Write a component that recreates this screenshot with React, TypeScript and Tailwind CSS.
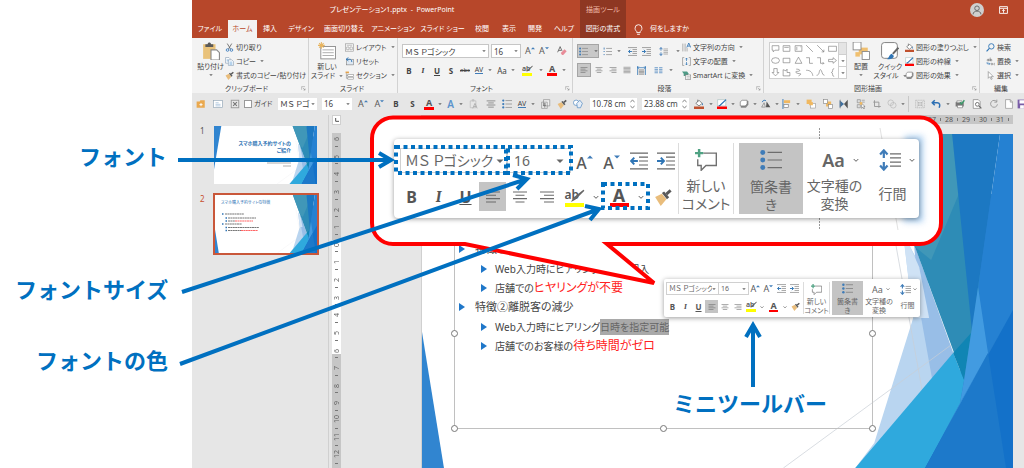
import type { ReactNode } from 'react';

const ICONS: Record<string, ReactNode> = {
  paste: (
    <>
      <rect x="1" y="2" width="11" height="13" fill="#e9c27a" />
      <path d="M3 2h2c0-2 3-2 3 0h2v2.500H3z" fill="#595959" />
      <path d="M8 7h5l2.500 2.500V16H8z" fill="#fff" stroke="#8a8a8a" />
    </>
  ),
  cut: (
    <>
      <path d="M4 1l6 10M12 1L6 11" stroke="#666" strokeWidth="1.500" />
      <circle cx="4.500" cy="12.500" r="2.300" fill="none" stroke="#3f7fbf" strokeWidth="1.600" />
      <circle cx="11.500" cy="12.500" r="2.300" fill="none" stroke="#3f7fbf" strokeWidth="1.600" />
    </>
  ),
  copy: (
    <>
      <path d="M1 1h6l2 2v8H1z" fill="#fff" stroke="#7b94ad" />
      <path d="M6 5h6l3 3v7H6z" fill="#fff" stroke="#7b94ad" />
      <path d="M8 9h5M8 11h5M8 13h5M3 5h3M3 7h3" stroke="#5b9bd5" />
    </>
  ),
  brush: (
    <>
      <path d="M1 8l6-3 4 5-5 6z" fill="#e9bd7c" />
      <path d="M7 4.500l4.500 5.500 2-1.700L9 3z" fill="#595959" />
      <path d="M11 5.500L14.800 2.200" stroke="#595959" strokeWidth="2.600" />
    </>
  ),
  newSlide: (
    <>
      <rect x="2.500" y="4" width="13" height="11" fill="#fff" stroke="#8a8a8a" strokeWidth=".8" />
      <path d="M4 7h10M4 9.500h10M4 12h10" stroke="#9a9a9a" strokeWidth=".7" />
      <path d="M3 0v6M0 3h6M1 1l4 4M5 1L1 5" stroke="#e8b45e" strokeWidth=".9" />
    </>
  ),
  layout: (
    <>
      <rect x=".8" y="1.500" width="14.400" height="13" fill="#fff" stroke="#8a8a8a" />
      <path d="M3 4h10M3 7h4v5H3zM9 7h4v5H9z" fill="none" stroke="#8a8a8a" />
    </>
  ),
  reset: (
    <>
      <rect x="3" y="4" width="12" height="10" fill="#dfe9f3" stroke="#777" />
      <path d="M6 1L2 4l4 3M2 4h6c3 0 4 2 4 5" fill="none" stroke="#2f75b5" strokeWidth="1.600" />
    </>
  ),
  section: (
    <>
      <path d="M1 1h6v3H1z" fill="#e2a04a" />
      <rect x="5" y="6" width="10" height="3.500" fill="#fff" stroke="#888" />
      <rect x="5" y="11" width="10" height="3.500" fill="#fff" stroke="#888" />
      <path d="M2.500 4v9H5M2.500 8H5" fill="none" stroke="#888" />
    </>
  ),
  eraser: (
    <>
      <path d="M1 10L5 1l3 7M2.500 7h4" fill="none" stroke="#595959" strokeWidth="1.300" />
      <path d="M6 11l6-6 3.500 3.500L10 14.500H8z" fill="#e88c98" />
    </>
  ),
  bullets: (
    <>
      <g fill="#3f7cb8">
        <circle cx="2" cy="2.500" r="1.800" />
        <circle cx="2" cy="8" r="1.800" />
        <circle cx="2" cy="13.500" r="1.800" />
      </g>
      <path d="M5.500 2.500H16M5.500 8H16M5.500 13.500H16" stroke="#6d6d6d" strokeWidth=".9" />
    </>
  ),
  numbering: (
    <>
      <path d="M2 1v3.500M1 8h2M1 13.500h2" stroke="#3f7cb8" strokeWidth="1.600" />
      <path d="M5.500 2.500H16M5.500 8H16M5.500 13.500H16" stroke="#6d6d6d" strokeWidth="1" />
    </>
  ),
  outdent: (
    <>
      <path d="M0 1h16M8 4.500h8M8 8h8M8 11.500h8M0 15h16" stroke="#666" strokeWidth="1" />
      <path d="M7 8H1M3.800 5L1 8l2.800 3" fill="none" stroke="#2f75b5" strokeWidth="1.700" />
    </>
  ),
  indent: (
    <>
      <path d="M0 1h16M8 4.500h8M8 8h8M8 11.500h8M0 15h16" stroke="#666" strokeWidth="1" />
      <path d="M0 8h6M3.400 5l2.800 3-2.800 3" fill="none" stroke="#2f75b5" strokeWidth="1.700" />
    </>
  ),
  spacing: (
    <>
      <path d="M3.500 1v5.500M3.500 9.500V15M.8 4L3.500 1 6.200 4M.8 12l2.700 3 2.700-3" fill="none" stroke="#3f7cb8" strokeWidth="1.600" />
      <path d="M8 3.500h8M8 6.500h8M8 9.500h8M8 12.500h8" stroke="#6d6d6d" strokeWidth=".9" />
    </>
  ),
  left: <path d="M1 3h14M1 6.300h10M1 9.600h14M1 13h10" stroke="#6a6a6a" strokeWidth="1.100" />,
  center: <path d="M1 3h14M3.500 6.300h9M1 9.600h14M3.500 13h9" stroke="#6a6a6a" strokeWidth="1.100" />,
  right: <path d="M1 3h14M5 6.300h10M1 9.600h14M5 13h10" stroke="#6a6a6a" strokeWidth="1.100" />,
  justify: <path d="M1 2.500h14M1 5.300h14M1 8h14M1 10.800h14M1 13.500h14" stroke="#6a6a6a" strokeWidth="1.100" />,
  distribute: (
    <>
      <path d="M1 0v16M15 0v16M1 3h14M3 1L1 3l2 2M13 1l2 2-2 2" fill="none" stroke="#2f75b5" strokeWidth="1.300" />
      <path d="M3 7h10M3 9.500h10M3 12h10M3 14.500h10" stroke="#6a6a6a" strokeWidth="1.200" />
    </>
  ),
  columns: <path d="M1 3h6M1 6h6M1 9h6M1 12h6M9 3h6M9 6h6M9 9h6M9 12h6" stroke="#5b8fc4" strokeWidth="1.500" />,
  direction: (
    <>
      <path d="M1.500 1v14M5.500 1v14M9 9v6" stroke="#777" strokeWidth="1" />
      <path d="M8.500 8L12 0l3.500 8M10 5.500h4" fill="none" stroke="#2f75b5" strokeWidth="1.500" />
    </>
  ),
  textAlign: (
    <>
      <path d="M4 1H1v14h3M12 1h3v14h-3" fill="none" stroke="#777" />
      <path d="M8 2v5M8 9v5M6 4l2-2 2 2M6 12l2 2 2-2" fill="none" stroke="#2f75b5" strokeWidth="1.300" />
    </>
  ),
  smartArt: (
    <>
      <path d="M0 1h9l3 4-3 4H3V5z" fill="#4e9a86" />
      <rect x="6" y="7" width="9.500" height="8" fill="#fff" stroke="#777" />
      <path d="M8 10h6M8 12.500h6" stroke="#999" />
    </>
  ),
  arrange: (
    <>
      <rect x="6" y="5" width="8" height="6" fill="#f0c070" />
      <rect x="1" y="0" width="7" height="7" fill="#fff" stroke="#888" strokeWidth=".8" />
      <rect x="9" y="8.500" width="6.500" height="7" fill="#fff" stroke="#888" strokeWidth=".8" />
      <path d="M3 9h4v4H3z" fill="#f0c070" />
    </>
  ),
  quickStyle: (
    <>
      <rect x=".5" y=".5" width="14" height="14" rx="2.500" fill="#fff" stroke="#777" strokeWidth=".8" />
      <path d="M15.500 5l-5 5.500" stroke="#666" strokeWidth="1.800" />
      <path d="M5 15c2 0 2-3.500 4.500-4.500l2 2C10.500 15 8 16 5 15z" fill="#2f75b5" />
    </>
  ),
  fill: (
    <>
      <path d="M3 7l5-5 5 5-5 4z" fill="#fff" stroke="#666" strokeWidth="1.200" />
      <path d="M13 6c2 2 2 4 0 4z" fill="#2f75b5" />
      <path d="M6 1v4" stroke="#666" strokeWidth="1.200" />
      <rect x="0" y="12" width="16" height="4" fill="#c0502d" />
    </>
  ),
  outline: (
    <>
      <path d="M1 1h13v10H1z" fill="#fff" stroke="#8aa" strokeWidth=".7" />
      <path d="M14.500 1L5 10l-2 1" fill="none" stroke="#2f75b5" strokeWidth="2" />
      <rect x="0" y="12" width="16" height="4" fill="#f00" />
    </>
  ),
  effect: (
    <>
      <path d="M3 8l4-5h8v6l-4 5H3z" fill="#8a8a8a" />
      <path d="M2 4.500L5 2h8v6l-3 3H2z" fill="#fff" stroke="#666" />
    </>
  ),
  search: (
    <>
      <circle cx="9.500" cy="6" r="4.800" fill="none" stroke="#2f75b5" strokeWidth="1.600" />
      <path d="M6 9.500L1 15" stroke="#2f75b5" strokeWidth="2" />
    </>
  ),
  replace: (
    <>
      <path d="M2 5.500a1.500 1.500 0 1 0 3 0 1.500 1.500 0 1 0-3 0M5.300 3v4.300M7.500 1v6.300M7.500 5.500a1.500 1.500 0 1 0 3 0 1.500 1.500 0 1 0-3 0" fill="none" stroke="#666" />
      <path d="M2 9v3h5M5 10l2 2-2 2" fill="none" stroke="#2f75b5" strokeWidth="1.200" />
      <path d="M9 12.500a1.500 1.500 0 1 0 3 0 1.500 1.500 0 1 0-3 0M15.500 11.500c-2-1-2.500 3 0 2.300" fill="none" stroke="#666" />
    </>
  ),
  pointer: <path d="M4 1v12l3-3 2 5 2-1-2-4h4z" fill="#fff" stroke="#777" strokeWidth="1" />,
  folder: (
    <>
      <path d="M1 4h5l1-2h7v12H1z" fill="#eaa94f" />
      <path d="M8 6.500v5M5.500 9h5" stroke="#fff" strokeWidth="1.500" />
    </>
  ),
  mail: (
    <>
      <rect x="1" y="2.500" width="14" height="11" fill="#fff" stroke="#8fa3b5" />
      <path d="M4 6h5M4 8.500h8M4 11h8" stroke="#8fb0d0" />
    </>
  ),
  close: (
    <>
      <rect x="2" y="2" width="12" height="12" fill="#e8e8e8" stroke="#999" strokeWidth="1.500" />
      <path d="M5 5l6 6M11 5l-6 6" stroke="#777" strokeWidth="1.800" />
    </>
  ),
  pasteText: (
    <>
      <path d="M2 3h9v11H2zM5 1h3v2H5z" fill="none" stroke="#b5b5b5" />
      <path d="M6 15l3.500-8 3.500 8M7.500 12h4" fill="none" stroke="#aaa" strokeWidth="1.300" />
    </>
  ),
  doc: (
    <>
      <path d="M4 1h10v10H4zM1 5h9v10H1z" fill="#eee" stroke="#888" />
      <path d="M3 8h5M3 10.500h5M6 6v8" stroke="#666" />
    </>
  ),
  shapes: (
    <>
      <circle cx="5" cy="6" r="4.300" fill="#fff" stroke="#5b8fc4" strokeWidth="1.200" />
      <path d="M6 7l5-5 4 5-3 7H7z" fill="#e5eef8" stroke="#5b8fc4" strokeWidth="1.200" />
    </>
  ),
  rotate: (
    <>
      <path d="M8 13h7L9 4z" fill="#555" />
      <path d="M7 13H1l4-7z" fill="none" stroke="#777" />
      <path d="M2 5c1-3 4-4 6-2" fill="none" stroke="#2f75b5" strokeWidth="1.400" />
    </>
  ),
  alignObj: (
    <>
      <path d="M1.500 0v16" stroke="#2f75b5" strokeWidth="1.400" />
      <rect x="3" y="2" width="10" height="4.500" fill="#f0b860" />
      <rect x="3" y="9" width="7" height="4.500" fill="#fff" stroke="#777" />
    </>
  ),
  forward: (
    <>
      <rect x="1" y="1" width="8" height="7" fill="#f0b860" />
      <rect x="7" y="7" width="8" height="7.500" fill="#fff" stroke="#999" />
      <path d="M5 5h6v5H5z" fill="#f0b860" />
    </>
  ),
  backward: (
    <>
      <rect x="5" y="4" width="8" height="8" fill="#f0b860" />
      <rect x="1" y="1" width="6" height="6" fill="#fff" stroke="#888" />
      <rect x="9" y="9" width="6" height="6" fill="#fff" stroke="#888" />
    </>
  ),
  flip: (
    <>
      <path d="M1 2l7 6-7 6z" fill="#3d6f9f" />
      <path d="M14 1v14L8 8z" fill="#555" />
      <path d="M2 1v14" stroke="#777" />
    </>
  ),
  pane: (
    <>
      <path d="M2 1h5v5H2zM2 9h5v5H2z" fill="#ddd" stroke="#888" />
      <path d="M9 2h5M9 5h5" stroke="#888" />
      <path d="M9 7v8l2-2 1.500 3 1-1-1-3h2z" fill="#fff" stroke="#777" />
      <path d="M6 5h4v4H6z" fill="#f0b860" />
    </>
  ),
  crop: <path d="M4 2v10h10M2 5h9v9" fill="none" stroke="#999" strokeWidth="1.500" />,
  merge: (
    <>
      <circle cx="6" cy="6" r="4.500" fill="none" stroke="#b5b5b5" />
      <circle cx="10" cy="10" r="4.500" fill="none" stroke="#b5b5b5" />
    </>
  ),
  frame: (
    <>
      <path d="M1 2h14v12H1z" fill="none" stroke="#aaa" strokeDasharray="2 1" />
      <path d="M3 4l4 3M13 4L9 7M3 12l4-3M13 12L9 9M5 6h6v4H5z" fill="#eee" stroke="#aaa" />
    </>
  ),
  undo: <path d="M6 2L2 6l4 4M2.500 6H10c4 0 5 4 3 8" fill="none" stroke="#2c6fb3" strokeWidth="2.400" />,
  check: (
    <>
      <path d="M1 5h13v7H1z" fill="#777" />
      <path d="M3 3h8v3H3zM4 10h8v4H4z" fill="#fff" stroke="#777" />
      <path d="M8 5l2.500 3L15 2" fill="none" stroke="#3a9b6a" strokeWidth="2.200" />
    </>
  ),
  preview: (
    <>
      <path d="M2 1h8l3 3v11H2z" fill="#fff" stroke="#777" />
      <circle cx="8.500" cy="8.500" r="3" fill="#fff" stroke="#666" strokeWidth="1.400" />
      <path d="M11 11l4 4" stroke="#666" strokeWidth="2" />
    </>
  ),
  refresh: <path d="M12.500 4.500a5.500 5.500 0 1 0 1 4M12.500 1v4h-4" fill="none" stroke="#999" strokeWidth="1.500" />,
  page: <path d="M2.500 1h7.500l3.500 3.500V15h-11zM10 1v4h3.500" fill="#fff" stroke="#888" />,
  save: (
    <>
      <path d="M1 1h14v14H1z" fill="#7a5ea8" />
      <path d="M4 2h8v5H4zM5 10h6v5H5z" fill="#fff" />
    </>
  ),
  comment: (
    <>
      <path d="M6 3h9.500v9H8l-3.500 3.500V12H2V7.500" fill="none" stroke="#707070" strokeWidth="1" />
      <path d="M3 0v6M0 3h6" stroke="#4fa283" strokeWidth="1.800" />
    </>
  ),
  marker: <path d="M15 2L7 10l-2 1 1-2z" fill="#666" stroke="#666" strokeWidth="1.300" />,
  launcher: (
    <>
      <path d="M2 12V2h11" fill="none" stroke="#888" strokeWidth="1.500" />
      <path d="M6 6l7 7M13 8v5H8" fill="none" stroke="#777" strokeWidth="1.500" />
    </>
  ),
  chevron: <path d="M2 5.500l6 6 6-6" fill="none" stroke="#555" strokeWidth="2.600" />,
  down: <path d="M1 5h14l-7 7z" fill="#666" />,
  bulb: (
    <path d="M5.500 11C3 9 3 6.500 3 6a5 5 0 0 1 10 0c0 .5 0 3-2.500 5v1.500h-5zM6 15h4" fill="none" stroke="#fff" strokeWidth="1.300" />
  ),
};

function Icon({ name, className = 'size-[10px]' }: { name: string; className?: string }) {
  return (
    <svg viewBox="0 0 16 16" className={`shrink-0 ${className}`} aria-hidden="true">
      {ICONS[name]}
    </svg>
  );
}

const Chev = () => <Icon name="down" className="size-1" />;

function RedA({ className, bar }: { className: string; bar: string }) {
  return (
    <span className="flex flex-col items-center">
      <span className={`font-bold text-[#555] ${className}`}>A</span>
      <span className={`bg-[#f00] ${bar}`} />
    </span>
  );
}

function Highlighter({ big }: { big?: boolean }) {
  return (
    <span className="relative flex flex-col items-start font-semibold text-[#555]">
      <span className={big ? 'w-[19px] text-left text-xs leading-4' : 'w-2.5 text-left text-[7px] leading-2'}>ab</span>
      <span className={big ? 'h-1 w-[19px] bg-[#ff0]' : 'h-[3px] w-2.5 bg-[#ff0]'} />
      <Icon name="marker" className={big ? 'absolute top-px left-0.5 size-[18px]' : 'absolute top-0 left-0.5 size-[9px]'} />
    </span>
  );
}

function SizeA({ up, big }: { up?: boolean; big?: boolean }) {
  return (
    <span className="flex items-center text-[#5a5a5a]">
      <span className={big ? 'pt-1 text-base leading-5 font-medium' : 'text-[9px] leading-3'}>A</span>
      <svg viewBox="0 0 6 12" className={big ? 'h-5 w-1.5' : 'h-2.5 w-1'} aria-hidden="true">
        <path d={up ? 'M0 3.500l3-3 3 3z' : 'M0 .5l3 3 3-3z'} fill="#3f7cb8" />
      </svg>
    </span>
  );
}

function Picker({ label, value, className, arrow = 'size-1' }: { label: string; value: string; className: string; arrow?: string }) {
  return (
    <label className={`flex shrink-0 items-center overflow-hidden bg-white ${className}`}>
      <select aria-label={label} className="min-w-0 flex-1 appearance-none bg-transparent outline-none" defaultValue={value}>
        <option>{value}</option>
      </select>
      <Icon name="down" className={arrow} />
    </label>
  );
}

const TABS = [
  { label: 'ファイル', w: 'w-9' },
  { label: 'ホーム', w: 'w-[29px]', active: true },
  { label: '挿入', w: 'w-[26px]' },
  { label: 'デザイン', w: 'w-9' },
  { label: '画面切り替え', w: 'w-[50px]' },
  { label: 'アニメーション', w: 'w-[48px]' },
  { label: 'スライド ショー', w: 'w-[51px]' },
  { label: '校閲', w: 'w-[28px]' },
  { label: '表示', w: 'w-[26px]' },
  { label: '開発', w: 'w-[26px]' },
  { label: 'ヘルプ', w: 'w-[32px]' },
];

function TitleBar() {
  return (
    <header className="flex h-[38px] bg-[#b7472a] text-[7px] text-white">
      <div className="flex w-[388px] flex-col">
        <div className="flex h-5 items-center justify-center pl-3">プレゼンテーション1.pptx&nbsp; -&nbsp; PowerPoint</div>
        <nav className="flex h-[18px]">
          {TABS.map((t) => (
            <button
              key={t.label}
              className={`flex shrink-0 items-center justify-center whitespace-nowrap ${t.w} ${t.active ? 'bg-[#f3f3f3] text-[#b7472a]' : ''}`}
            >
              {t.label}
            </button>
          ))}
        </nav>
      </div>
      <div className="flex w-[46px] flex-col items-center bg-[#8e3722]">
        <span className="flex h-5 items-center text-[#f0b9a6]">描画ツール</span>
        <button className="flex h-[18px] items-center whitespace-nowrap">図形の書式</button>
      </div>
      <div className="flex flex-1 flex-col">
        <div className="flex h-5 items-center justify-end gap-[15px] pr-4">
          <svg viewBox="0 0 16 16" className="size-3.5" aria-label="アカウント">
            <circle cx="8" cy="8" r="8" fill="#cfcfcf" />
            <circle cx="8" cy="6" r="2.600" fill="none" stroke="#666" strokeWidth="1.100" />
            <path d="M3.500 13c0-5 9-5 9 0" fill="none" stroke="#666" strokeWidth="1.100" />
          </svg>
          <svg viewBox="0 0 16 14" className="h-2 w-[9px]" aria-label="リボンの表示オプション">
            <path d="M1 1h14v12H1zM1 4h14M8 12V6M5.500 8.500L8 6l2.500 2.500" fill="none" stroke="#fff" strokeWidth="1.600" />
          </svg>
        </div>
        <button className="flex h-[18px] items-center gap-1.5 pl-[7px]">
          <Icon name="bulb" className="size-[11px]" />
          何をしますか
        </button>
      </div>
    </header>
  );
}

function Group({ label, className, launcher, children }: { label: string; className: string; launcher?: boolean; children: ReactNode }) {
  return (
    <section className={`flex shrink-0 flex-col overflow-hidden ${className}`}>
      <div className="flex h-[45px]">{children}</div>
      <div className="flex h-2.5 items-center pr-0.5">
        <span className="flex-1 text-center">{label}</span>
        {launcher && <Icon name="launcher" className="size-[5px]" />}
      </div>
    </section>
  );
}

function Cmd({ icon, label, chev }: { icon: string; label: string; chev?: boolean }) {
  return (
    <button className="flex h-3.5 items-center gap-0.5 whitespace-nowrap">
      <Icon name={icon} className="size-[9px]" />
      {label}
      {chev && <span className="pl-0.5"><Chev /></span>}
    </button>
  );
}

function BigCmd({ icon, lines, className, chev }: { icon: string; lines: string[]; className: string; chev?: 'inline' | 'below' }) {
  return (
    <button className={`flex shrink-0 flex-col items-center pt-1 leading-[9px] ${className}`}>
      <Icon name={icon} className="mb-[2px] size-[18px]" />
      {lines.map((l, i) => (
        <span key={l} className="flex items-center gap-1 whitespace-nowrap">
          {l}
          {chev === 'inline' && i === lines.length - 1 && <Chev />}
        </span>
      ))}
      {chev === 'below' && <span className="pt-0.5"><Chev /></span>}
    </button>
  );
}

const Cell = ({ w, children, on }: { w: string; children: ReactNode; on?: boolean }) => (
  <button className={`flex shrink-0 items-center justify-center ${w} ${on ? 'border border-[#a5a5a5] bg-[#c8c8c8]' : ''}`}>{children}</button>
);

const GALLERY = [
  'M2 3h12v8H7l-3 3v-3H2z', 'M2 3h12v10H2zM4 6h8', 'M2 3h12v10H2zM5 5v6M11 5h1', 'M2 2l12 12', 'M2 2l12 12M14 10v4h-4', 'M1 4h14v9H1z',
  'M1 8a7 5 0 1 0 14 0a7 5 0 1 0-14 0', 'M2 4h12v8H2z', 'M8 2l6 11H2z', 'M2 3h6v10h6', 'M2 3h6v10h6M12 11l2 2-2 2', 'M1 6h8V3l6 5-6 5v-3H1z',
  'M5 1h6v7h3l-6 6-6-6h3z', 'M2 3l5 2 2-3v6h5v6H2z', 'M4 2c8 0 8 4 2 4s-2 4 4 4-2 4-2 4', 'M2 4c8 0 11 4 12 10', 'M1 13C7 13 5 3 8 3s2 10 7 10', 'M11 1C6 1 10 8 6 8c4 0 0 7 5 7',
];

function Ribbon() {
  return (
    <div className="flex h-[55px] divide-x divide-[#d2d2d2] overflow-hidden bg-[#f3f3f3] text-[7px] leading-[9px] text-[#444]">
      <Group label="クリップボード" className="w-[117px]" launcher>
        <BigCmd icon="paste" lines={['貼り付け']} chev="below" className="w-[33px] pl-1" />
        <div className="flex flex-col pt-0.5">
          <Cmd icon="cut" label="切り取り" />
          <Cmd icon="copy" label="コピー" chev />
          <Cmd icon="brush" label="書式のコピー/貼り付け" />
        </div>
      </Group>
      <Group label="スライド" className="w-[89px]">
        <BigCmd icon="newSlide" lines={['新しい', 'スライド']} chev="inline" className="w-9" />
        <div className="flex flex-col pt-0.5">
          <Cmd icon="layout" label="レイアウト" chev />
          <Cmd icon="reset" label="リセット" />
          <Cmd icon="section" label="セクション" chev />
        </div>
      </Group>
      <Group label="フォント" className="w-[175px]" launcher>
        <div className="flex flex-col gap-[5px] pt-1.5 pl-1">
          <div className="flex h-3.5 items-center">
            <Picker label="フォント" value="ＭＳ Ｐゴシック" className="h-3.5 w-[87px] border border-[#c6c6c6] px-0.5 text-[8px]" />
            <Picker label="フォント サイズ" value="16" className="mx-0.5 h-3.5 w-[30px] border border-[#c6c6c6] px-0.5 text-[8px]" />
            <Cell w="w-[14px]"><SizeA up /></Cell>
            <Cell w="w-[14px]"><SizeA /></Cell>
            <Cell w="w-[22px]"><Icon name="eraser" /></Cell>
          </div>
          <div className="flex h-3.5 items-center text-[8px]">
            <Cell w="w-[14px]"><b>B</b></Cell>
            <Cell w="w-[14px]"><b className="font-serif italic">I</b></Cell>
            <Cell w="w-[14px]"><b className="underline">U</b></Cell>
            <Cell w="w-[14px]"><b>S</b></Cell>
            <Cell w="w-[14px]"><span className="text-[6px] line-through">abc</span></Cell>
            <Cell w="w-[14px]"><span className="border-b border-[#3f7cb8] text-[7px] leading-[7px]">AV</span></Cell>
            <Cell w="w-[8px]"><Chev /></Cell>
            <Cell w="w-[16px]">Aa</Cell>
            <Cell w="w-[6px]"><Chev /></Cell>
            <Cell w="w-[22px]"><Highlighter /></Cell>
            <Cell w="w-[6px]"><Chev /></Cell>
            <Cell w="w-[16px]"><RedA className="text-[9px] leading-2" bar="h-[3px] w-2.5" /></Cell>
            <Cell w="w-[7px]"><Chev /></Cell>
          </div>
        </div>
      </Group>
      <Group label="段落" className="w-[191px]" launcher>
        <div className="flex w-[109px] flex-col gap-[5px] pt-1.5 pl-1">
          <div className="flex h-3.5">
            <Cell w="w-[22px] gap-1.5" on><Icon name="bullets" className="size-[9px]" /><Chev /></Cell>
            <Cell w="w-[16px]"><Icon name="numbering" className="size-[9px]" /></Cell>
            <Cell w="w-[7px]"><Chev /></Cell>
            <Cell w="w-[20px]"><Icon name="outdent" className="size-[9px]" /></Cell>
            <Cell w="w-[9px]"><Icon name="indent" className="size-[9px]" /></Cell>
            <Cell w="w-[24px]"><Icon name="spacing" className="size-[9px]" /></Cell>
            <Cell w="w-[5px]"><Chev /></Cell>
          </div>
          <div className="flex h-3.5">
            <Cell w="w-[14px]" on><Icon name="left" className="size-2" /></Cell>
            <Cell w="w-[15px]"><Icon name="center" className="size-2" /></Cell>
            <Cell w="w-[14px]"><Icon name="right" className="size-2" /></Cell>
            <Cell w="w-[14px]"><Icon name="justify" className="size-2" /></Cell>
            <Cell w="w-[14px]"><Icon name="distribute" className="size-[9px]" /></Cell>
            <Cell w="w-[20px]"><Icon name="columns" className="size-[9px]" /></Cell>
            <Cell w="w-[5px]"><Chev /></Cell>
          </div>
        </div>
        <div className="flex flex-col pt-0.5">
          <Cmd icon="direction" label="文字列の方向" chev />
          <Cmd icon="textAlign" label="文字の配置" chev />
          <Cmd icon="smartArt" label="SmartArt に変換" chev />
        </div>
      </Group>
      <Group label="図形描画" className="w-[216px]" launcher>
        <div className="mt-1 ml-[5px] flex h-[37px] w-[78px] border border-[#cfcfcf] bg-white">
          <div className="grid flex-1 grid-cols-6 items-center justify-items-center">
            {GALLERY.map((d) => (
              <svg key={d} viewBox="0 0 16 16" className="size-[9px]" aria-hidden="true">
                <path d={d} fill="none" stroke="#777" strokeWidth="1.100" />
              </svg>
            ))}
          </div>
          <div className="flex w-2 flex-col divide-y divide-[#cfcfcf] border-l border-[#cfcfcf]">
            <button aria-label="前へ" className="flex flex-1 items-center justify-center bg-[#e4e4e4]" />
            <button aria-label="次へ" className="flex flex-1 items-center justify-center"><Chev /></button>
            <button aria-label="その他" className="flex flex-1 items-center justify-center"><Chev /></button>
          </div>
        </div>
        <BigCmd icon="arrange" lines={['配置']} chev="below" className="w-[28px]" />
        <BigCmd icon="quickStyle" lines={['クイック', 'スタイル']} chev="inline" className="w-[30px]" />
        <div className="flex flex-col pt-0.5">
          <Cmd icon="fill" label="図形の塗りつぶし" chev />
          <Cmd icon="outline" label="図形の枠線" chev />
          <Cmd icon="effect" label="図形の効果" chev />
        </div>
      </Group>
      <Group label="編集" className="flex-1">
        <div className="flex flex-col pt-0.5 pl-1.5">
          <Cmd icon="search" label="検索" />
          <Cmd icon="replace" label="置換" chev />
          <Cmd icon="pointer" label="選択" chev />
        </div>
      </Group>
    </div>
  );
}

type Tool = { i?: string; w: string };
const TOOLS_A: Tool[] = [
  { i: 'pasteText', w: 'w-[19px]' }, { i: 'center', w: 'w-4' }, { i: 'bullets', w: 'w-4' },
];
const TOOLS_B: Tool[] = [
  { i: 'doc', w: 'w-[17px]' }, { i: 'brush', w: 'w-4' }, { i: 'shapes', w: 'w-4' },
];
const TOOLS_C: Tool[] = [
  { i: 'fill', w: 'w-4' }, { w: 'w-[7px]' }, { i: 'outline', w: 'w-4' }, { w: 'w-[6px]' }, { i: 'effect', w: 'w-[15px]' }, { w: 'w-[7px]' },
  { i: 'rotate', w: 'w-[15px]' }, { w: 'w-[7px]' }, { i: 'alignObj', w: 'w-[14px]' }, { w: 'w-2' }, { i: 'forward', w: 'w-[17px]' },
  { i: 'backward', w: 'w-[17px]' }, { i: 'flip', w: 'w-4' }, { i: 'pane', w: 'w-[17px]' }, { i: 'crop', w: 'w-4' }, { i: 'merge', w: 'w-[14px]' }, { w: 'w-2' },
];
const TOOLS_D: Tool[] = [
  { i: 'frame', w: 'w-4' }, { i: 'undo', w: 'w-4' }, { w: 'w-2' }, { i: 'check', w: 'w-4' }, { i: 'preview', w: 'w-[17px]' },
  { i: 'refresh', w: 'w-[17px]' }, { i: 'page', w: 'w-[14px]' }, { i: 'save', w: 'w-3' },
];

const Tools = ({ items }: { items: Tool[] }) => (
  <>
    {items.map((t, n) => (
      <Cell key={n} w={t.w}>{t.i ? <Icon name={t.i} /> : <Chev />}</Cell>
    ))}
  </>
);

function SizeInput({ label, value, className }: { label: string; value: string; className: string }) {
  return (
    <label className={`flex h-3 w-[47px] shrink-0 items-center bg-white ${className}`}>
      <input aria-label={label} defaultValue={value} className="min-w-0 flex-1 pl-0.5 text-[8px] outline-none" />
      <svg viewBox="0 0 6 12" className="h-2.5 w-[7px] pr-0.5" aria-hidden="true">
        <path d="M.5 4L3 1l2.500 3M.5 8L3 11l2.500-3" fill="none" stroke="#777" />
      </svg>
    </label>
  );
}

function QuickBar() {
  return (
    <div className="flex h-[22px] items-center overflow-hidden bg-[#e6e6e6] pl-px text-[8px] text-[#444]">
      <Tools items={[{ i: 'folder', w: 'w-4' }, { i: 'mail', w: 'w-[17px]' }, { i: 'close', w: 'w-[17px]' }]} />
      <label className="flex w-[35px] shrink-0 items-center gap-0.5 pl-px text-[7px]">
        <input type="checkbox" className="size-2 appearance-none border border-[#999] bg-white" />
        ガイド
      </label>
      <Picker label="フォント" value="ＭＳ Ｐゴ" className="mr-[5px] h-3 w-[39px] px-0.5" />
      <Picker label="フォント サイズ" value="16" className="mr-[3px] h-3 w-[30px] px-0.5" />
      <Cell w="w-4"><SizeA up /></Cell>
      <Cell w="w-[17px]"><SizeA /></Cell>
      <Cell w="w-4"><b>B</b></Cell>
      <Cell w="w-[17px]"><b>S</b></Cell>
      <Cell w="w-4"><RedA className="text-[9px] leading-2" bar="h-[3px] w-2.5" /></Cell>
      <Cell w="w-[6px]"><Chev /></Cell>
      <Cell w="w-[15px]"><span className="text-[10px] font-semibold text-[#5b93cc]">A</span></Cell>
      <Cell w="w-[6px]"><Chev /></Cell>
      <Tools items={TOOLS_A} />
      <Cell w="w-[14px]"><span className="border-b border-[#3f7cb8] text-[7px] leading-[7px]">AV</span></Cell>
      <Cell w="w-2"><Chev /></Cell>
      <Tools items={TOOLS_B} />
      <SizeInput label="図形の高さ" value="10.78 cm" className="mr-[5px] ml-1" />
      <SizeInput label="図形の幅" value="23.88 cm" className="mr-0.5" />
      <Tools items={TOOLS_C} />
      <span className="mr-[3px] ml-px h-4 w-px shrink-0 bg-[#c8c8c8]" />
      <Tools items={TOOLS_D} />
    </div>
  );
}

function SlideArt({ cover }: { cover?: boolean }) {
  return (
    <svg viewBox="0 0 592 334" preserveAspectRatio="none" className="absolute inset-0 size-full" aria-hidden="true">
      <path d={cover ? 'M0 0h42L0 250z' : 'M0 198v136h22z'} fill="#3185d0" />
      <path d="M482 100l10 84-39 125-19 25h90l-18-190z" fill="#b9d5f0" />
      <path d="M482 0l18 184 22 122 20-60-48-133z" fill="#98bee7" />
      <path d="M482 100l7 13 9 20 10 51h-16z" fill="#cfe2f5" />
      <path d="M470 85L515 334M362 334L560 189" stroke="#c9cfd6" strokeOpacity=".7" fill="none" />
      <path d="M545 60h47v274h-90l37-90z" fill="#2a7fcb" />
      <path d="M452 0h80l30 152-19 94z" fill="#2e8cb6" />
      <path d="M452 0h79l13 45-34 81-16-13z" fill="#4097b8" />
      <path d="M531 0h48l-22 153-6 45z" fill="#1c78c2" />
      <path d="M579 0h13v177l-25 43-10-67z" fill="#2581d2" />
      <path d="M434 334l98-115 11 27-4 23-35 65z" fill="#2fa9dd" />
      <path d="M532 219l18-20-7 47z" fill="#1085b4" />
      <path d="M557 153l10 66-28 50 4-23z" fill="#429be1" />
      <path d="M567 219l-28 50-25 49z" fill="#3b96dd" />
      <path d="M592 176l-88 158h88z" fill="#1371c9" />
      <path d="M567 219l-63 115h81z" fill="#1d79ca" />
    </svg>
  );
}

function Thumbs() {
  return (
    <aside className="flex w-[137px] shrink-0 flex-col gap-[9px] border-r border-[#d0d0d0] pt-2.5 pl-2">
      <div className="flex gap-2">
        <span className="w-1.5 text-[8px] leading-3 text-[#555]">1</span>
        <div className="relative mt-px h-[58px] w-[103px] bg-white">
          <SlideArt cover />
          <div className="relative flex flex-col pt-3.5 pr-[26px] text-right text-[5px] leading-[7px] font-bold text-[#2f74b5]">
            <span>スマホ購入予約サイトの</span>
            <span>ご紹介</span>
          </div>
          <svg viewBox="0 0 24 5" className="relative mt-2 ml-[53px] h-[5px] w-6" aria-hidden="true">
            <path d="M0 1h24M16 4h8" stroke="#999" strokeWidth=".8" />
          </svg>
        </div>
      </div>
      <div className="flex gap-[7px]">
        <span className="w-1.5 text-[8px] leading-3 text-[#c8502f]">2</span>
        <div className="relative h-[62px] w-[106px] border-2 border-[#c9573a] bg-white">
          <SlideArt />
          <div className="relative pt-[5px] pl-1.5 text-[4px] leading-[6px] text-[#2f74b5]">スマホ購入予約サイトの特徴</div>
          <svg viewBox="0 0 40 20" className="relative mt-1.5 ml-[7px] h-5 w-10" aria-hidden="true">
            <path d="M3 2h19M3 12h17" stroke="#777" strokeWidth="1.100" strokeDasharray="2 .4" />
            <path d="M6 6h28M6 9h7M6 15.500h31M6 18.500h13" stroke="#777" strokeWidth="1" strokeDasharray="2 .4" />
            <path d="M13 9h18M19 18.500h17" stroke="#f66" strokeWidth="1.200" strokeDasharray="2 .4" />
            <path d="M0 2h1.500M3.500 6h1.500M3.500 9h1.500M0 12h1.500M3.500 15.500h1.500M3.500 18.500h1.500" stroke="#2f74b5" strokeWidth="1.500" />
          </svg>
        </div>
      </div>
    </aside>
  );
}

const V_MARKS = [6, 5, 4, 3, 2, 1, 0, 1, 2, 3, 4, 5, 6, 7, 8, 9, 10, 11, 12];
const H_MARKS = Array.from({ length: 34 }, (_, n) => n - 2).filter((n) => n <= 31);

function VerticalRuler() {
  return (
    <div className="flex w-3 shrink-0 flex-col pl-[3px] text-[7px] text-[#666]">
      <div className="mb-2 flex h-2.5 w-[9px] items-center justify-center border border-[#d0d0d0] bg-white">
        <svg viewBox="0 0 6 6" className="size-1" aria-hidden="true"><path d="M1 0v5h5" fill="none" stroke="#555" strokeWidth="1.500" /></svg>
      </div>
      <div className="flex w-[9px] flex-1 flex-col bg-[linear-gradient(#c6c6c6_32%,#fff_32%,#fff_66%,#c6c6c6_66%)]">
        {V_MARKS.map((n, i) => (
          <div key={i} className="flex min-h-0 flex-1 flex-col items-center justify-between">
            <span className="flex h-2 items-center leading-2 [writing-mode:vertical-rl] rotate-180">{n}</span>
            <span className="mb-1 h-px w-[3px] bg-[#777]" />
          </div>
        ))}
      </div>
    </div>
  );
}

function Bullet({ level, children }: { level: 1 | 2; children: ReactNode }) {
  return (
    <li className={`flex items-center whitespace-nowrap ${level === 1 ? 'h-5 gap-2.5 text-[11px]' : 'h-[19px] gap-2 pl-[22px] text-[10px]'}`}>
      <svg viewBox="0 0 6 8" className="h-2 w-1.5 shrink-0" aria-hidden="true"><path d="M0 0l6 4-6 4z" fill="#1f77c9" /></svg>
      <span>{children}</span>
    </li>
  );
}

const HANDLES = [
  'left-[29px] top-[196px]', 'left-[447px] top-[196px]', 'left-[29px] top-[291px]', 'left-[238px] top-[291px]', 'left-[447px] top-[291px]',
];

function Slide() {
  return (
    <div className="relative aspect-[592/334] overflow-hidden border-l border-[#d0d0d0] bg-white">
      <SlideArt />
      <div className="absolute top-10 left-8 h-[255px] w-[419px] border border-[#c0c0c0]" />
      {HANDLES.map((p) => (
        <span key={p} className={`absolute size-[7px] rounded-full border-[1.5px] border-[#777] bg-white ${p}`} />
      ))}
      <ul className="relative flex flex-col pt-[105px] pl-[37px] leading-4 text-[#444]">
        <Bullet level={1}>特徴①</Bullet>
        <Bullet level={2}>Web入力時にヒアリング項目を記入</Bullet>
        <Bullet level={2}>店舗での<span className="text-xs text-[#f22]">ヒヤリングが不要</span></Bullet>
        <Bullet level={1}>特徴②離脱客の減少</Bullet>
        <Bullet level={2}>Web入力時にヒアリング<span className="inline-block bg-[#a9a9a9] text-[#666]">日時を指定可能</span></Bullet>
        <Bullet level={2}>店舗でのお客様の<span className="text-xs text-[#f22]">待ち時間がゼロ</span></Bullet>
      </ul>
    </div>
  );
}

const MINI = {
  sm: {
    root: 'h-[38px] w-64 text-[7px] leading-[9px] rounded-xs',
    left: 'w-[139px] pt-[3px] gap-[5px]', row1: 'h-[13px] pl-0.5', row2: 'h-[13px] pl-0.5',
    font: 'w-[53px] h-[13px] px-0.5 text-[7px]', size: 'w-[30px] h-[13px] px-0.5 text-[7px] border-l-0', arrow: 'size-1',
    c1: 'w-[13px]', b: 'w-[13px]', on: 'h-[13px]', text: 'text-[8px]', icon: 'size-[9px]', al: 'size-2',
    hl: 'w-3.5', ch: 'w-2', a: 'w-[15px]', ch2: 'w-[7px]', br: 'w-[15px]', chev: 'size-1',
    aText: 'text-[9px] leading-2', bar: 'h-0.5 w-[9px]',
    cm: 'w-[25px]', bl: 'ml-0.5 w-[31px] my-0.5', aa: 'w-8', sp: 'w-[25px]', head: 'mt-1 h-3 mb-0.5', headOn: 'mt-0.5 h-3 mb-[3px]', big: 'size-[11px]', aaText: 'text-[9px]', gap: 'gap-[3px] pl-1', spGap: 'gap-0.5 pl-px', sep: 'my-[3px]', low: 'pt-1',
  },
  lg: {
    root: 'h-[79px] w-[525px] text-sm leading-[18px] rounded',
    left: 'w-[284px] pt-[9px] gap-[9px]', row1: 'h-[25px] pl-1.5', row2: 'h-[29px] pl-1',
    font: 'w-[107px] h-[25px] pl-1 pr-0.5 text-sm', size: 'w-16 h-[25px] px-1.5 text-sm', arrow: 'size-2',
    c1: 'w-[27px]', b: 'w-[27px]', on: 'h-[29px]', text: 'text-base', icon: 'size-[18px]', al: 'size-4',
    hl: 'w-7', ch: 'w-[15px]', a: 'w-8', ch2: 'w-3', br: 'w-[31px]', chev: 'size-1.5',
    aText: 'text-lg leading-4', bar: 'h-1 w-[19px]',
    cm: 'w-[54px]', bl: 'ml-[5px] w-16 my-1', aa: 'w-[63px]', sp: 'w-[53px]', head: 'mt-2 h-[26px] mb-1', headOn: 'mt-1 h-[26px] mb-1.5', big: 'size-[22px]', aaText: 'text-lg font-semibold', gap: 'gap-2 pl-3', spGap: 'gap-2 pl-2', sep: 'my-1', low: 'pt-2',
  },
};

function MiniToolbar({ size }: { size: 'sm' | 'lg' }) {
  const m = MINI[size];
  const big = size === 'lg';
  const block = 'flex shrink-0 flex-col items-center whitespace-nowrap';
  return (
    <div role="toolbar" aria-label="ミニツールバー" className={`flex bg-white text-[#666] shadow-[0_1px_5px_rgba(0,0,0,0.4)] ${m.root}`}>
      <div className={`flex shrink-0 flex-col ${m.left}`}>
        <div className={`flex items-center ${m.row1}`}>
          <Picker label="フォント" value="ＭＳ Ｐゴシック" className={`border border-[#d0d0d0] ${m.font}`} arrow={m.arrow} />
          <Picker label="フォント サイズ" value="16" className={`border border-[#d0d0d0] ${m.size}`} arrow={m.arrow} />
          <Cell w={m.c1}><SizeA up big={big} /></Cell>
          <Cell w={m.c1}><SizeA big={big} /></Cell>
          <Cell w={m.c1}><Icon name="outdent" className={m.icon} /></Cell>
          <Cell w={m.c1}><Icon name="indent" className={m.icon} /></Cell>
        </div>
        <div className={`flex items-center text-[#555] ${m.row2} ${m.text}`}>
          <Cell w={m.b}><b>B</b></Cell>
          <Cell w={m.b}><b className="font-serif italic">I</b></Cell>
          <Cell w={m.b}><b className="underline">U</b></Cell>
          <button aria-label="左揃え" className={`flex shrink-0 items-center justify-center bg-[#c4c4c4] ${m.b} ${m.on}`}><Icon name="left" className={m.al} /></button>
          <Cell w={m.b}><Icon name="center" className={m.al} /></Cell>
          <Cell w={m.b}><Icon name="right" className={m.al} /></Cell>
          <Cell w={m.hl}><Highlighter big={big} /></Cell>
          <Cell w={m.ch}><Icon name="chevron" className={m.chev} /></Cell>
          <Cell w={m.a}><RedA className={m.aText} bar={m.bar} /></Cell>
          <Cell w={m.ch2}><Icon name="chevron" className={m.chev} /></Cell>
          <Cell w={m.br}><Icon name="brush" className={m.icon} /></Cell>
        </div>
      </div>
      <span className={`w-px bg-[#dcdcdc] ${m.sep}`} />
      <button className={`${block} ${m.cm}`}>
        <span className={`flex items-center ${m.head}`}><Icon name="comment" className={m.big} /></span>
        <span>新しい</span>
        <span>コメント</span>
      </button>
      <span className={`w-px bg-[#dcdcdc] ${m.sep}`} />
      <button className={`${block} bg-[#c4c4c4] ${m.bl}`}>
        <span className={`flex items-center ${m.headOn}`}><Icon name="bullets" className={m.big} /></span>
        <span>箇条書</span>
        <span>き</span>
      </button>
      <button className={`${block} ${m.aa}`}>
        <span className={`flex items-center ${m.head} ${m.gap}`}><span className={m.aaText}>Aa</span><Icon name="chevron" className={m.chev} /></span>
        <span>文字種の</span>
        <span>変換</span>
      </button>
      <button className={`${block} ${m.sp}`}>
        <span className={`flex items-center ${m.head} ${m.spGap}`}><Icon name="spacing" className={m.big} /><Icon name="chevron" className={m.chev} /></span>
        <span className={m.low}>行間</span>
      </button>
    </div>
  );
}

function Callout() {
  return (
    <svg viewBox="0 0 1024 468" className="absolute top-0 left-0 h-[468px] w-[1024px]" aria-hidden="true">
      <defs>
        <filter id="soft" x="-50%" y="-20%" width="200%" height="140%"><feGaussianBlur stdDeviation="3" /></filter>
      </defs>
      <path d="M393 117.500H920a21 21 0 0 1 21 21V223a21 21 0 0 1-21 21H607L654 283 465 244H393a21 21 0 0 1-21-21V138.500a21 21 0 0 1 21-21z" fill="#fff" stroke="#f00" strokeWidth="4" />
      <path d="M819.500 128v102" stroke="#999" strokeDasharray="2 1" />
      <path d="M880 128l18 102" stroke="#e2e2e2" />
      <path d="M905 136h18v86h-20z" fill="#9cc6ee" opacity=".8" filter="url(#soft)" />
    </svg>
  );
}

function Annotations() {
  return (
    <svg viewBox="0 0 1024 468" className="pointer-events-none absolute top-0 left-0 h-[468px] w-[1024px]" aria-hidden="true">
      <g fill="none" stroke="#0070c0" strokeWidth="4">
        <path d="M178 160H391M379 153l12 7-12 7" />
        <path d="M182 292L527 179M513 175l14 4-10 10" />
        <path d="M180 364L599 209M585 206l14 3-9 11" />
        <path d="M753 387V326M746 337l7-12 7 12" />
        <g strokeDasharray="4 3.500">
          <path d="M396 147H506V173H396z" />
          <path d="M508 147H571V173H508z" />
          <path d="M603 184H648V208H603z" />
        </g>
      </g>
    </svg>
  );
}

const NOTES = [
  { text: 'フォント', at: 'top-[143px] left-[79px]' },
  { text: 'フォントサイズ', at: 'top-[276px] left-[15px]' },
  { text: 'フォントの色', at: 'top-[347px] left-[36px]' },
  { text: 'ミニツールバー', at: 'top-[390px] left-[673px]' },
];

export default function App() {
  return (
    <div className="relative flex overflow-hidden bg-white font-['Noto_Sans','Noto_Sans_CJK_JP',sans-serif]">
      <div className="w-48 shrink-0" />
      <main className="flex min-w-0 flex-1 flex-col bg-[#e6e6e6] [font-feature-settings:'palt']">
        <TitleBar />
        <Ribbon />
        <QuickBar />
        <div className="flex">
          <Thumbs />
          <VerticalRuler />
          <div className="ml-20 min-w-0 flex-1 pr-[11px]">
            <div className="mb-2.5 flex h-[9px] justify-end overflow-hidden bg-[#c6c6c6] text-[7px] leading-[9px] text-[#555]">
              {H_MARKS.map((n) => (
                <span key={n} className="flex w-[17px] shrink-0 items-center justify-between">
                  <span className="h-[3px] w-px bg-[#777]" />
                  {Math.abs(n)}
                  <span />
                </span>
              ))}
              <span className="flex w-[5px] shrink-0 items-center"><span className="h-[3px] w-px bg-[#777]" /></span>
            </div>
            <Slide />
          </div>
        </div>
      </main>
      <div className="absolute top-[279px] left-[664px] [font-feature-settings:'palt']"><MiniToolbar size="sm" /></div>
      <Callout />
      <div className="absolute top-[139px] left-[394px] [font-feature-settings:'palt']"><MiniToolbar size="lg" /></div>
      <Annotations />
      {NOTES.map((n) => (
        <span key={n.text} className={`absolute text-[22px] leading-[26px] font-bold whitespace-nowrap text-[#0070c0] ${n.at}`}>{n.text}</span>
      ))}
    </div>
  );
}
